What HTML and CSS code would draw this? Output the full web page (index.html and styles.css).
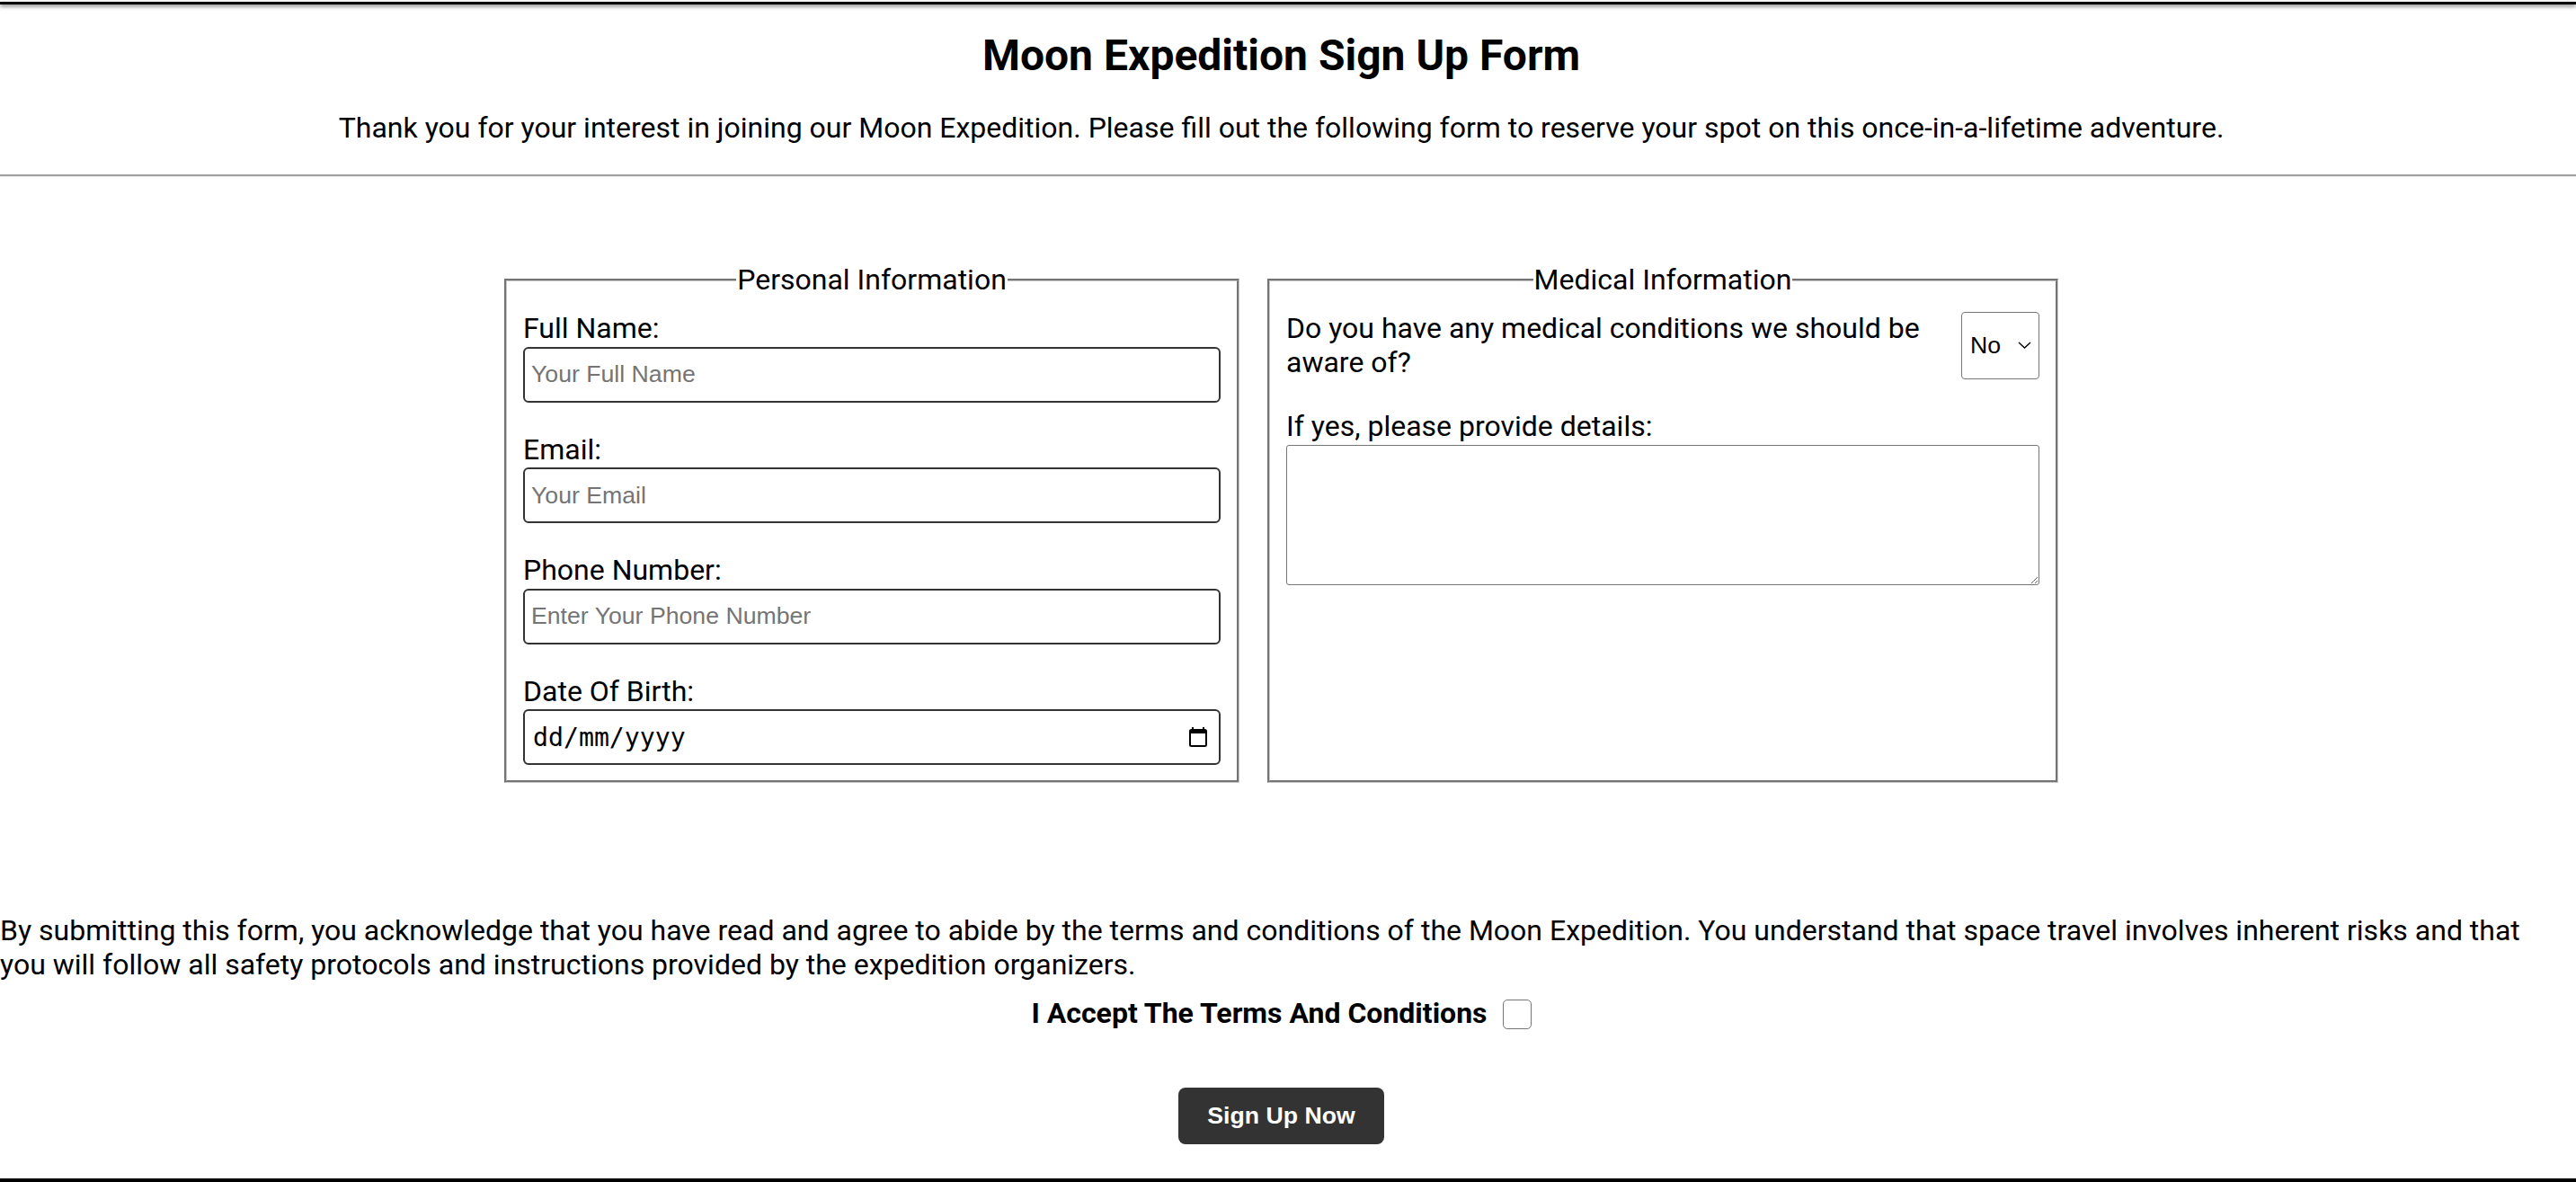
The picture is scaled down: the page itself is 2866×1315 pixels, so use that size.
FILE: index.html
```html
<!DOCTYPE html>
<html lang="en">
<head>
<meta charset="utf-8">
<title>Moon Expedition Sign Up Form</title>
<link rel="stylesheet" href="styles.css">
</head>
<body>
<div class="topbar"></div>
<header class="page-header">
  <h1 class="title">Moon Expedition Sign Up Form</h1>
  <p class="intro">Thank you for your interest in joining our Moon Expedition. Please fill out the following form to reserve your spot on this once-in-a-lifetime adventure.</p>
</header>
<div class="rule"></div>
<main class="content">
  <form class="signup" onsubmit="return false">
    <div class="sections">
      <fieldset class="section section-personal">
        <legend class="section-title">Personal Information</legend>
        <div class="field">
          <label class="field-label" for="fullname">Full Name:</label>
          <input class="text-input" id="fullname" type="text" placeholder="Your Full Name">
        </div>
        <div class="field">
          <label class="field-label" for="email">Email:</label>
          <input class="text-input" id="email" type="email" placeholder="Your Email">
        </div>
        <div class="field">
          <label class="field-label" for="phone">Phone Number:</label>
          <input class="text-input" id="phone" type="tel" placeholder="Enter Your Phone Number">
        </div>
        <div class="field field-last">
          <label class="field-label">Date Of Birth:</label>
          <div class="date-input">
            <span class="date-text">dd/mm/yyyy</span>
            <svg class="calendar-icon" width="20" height="22" viewBox="0 0 20 22" aria-hidden="true">
              <rect x="3" y="0" width="2" height="4" fill="#000"/>
              <rect x="15" y="0" width="2" height="4" fill="#000"/>
              <rect x="1" y="3" width="18" height="18" rx="1.5" fill="none" stroke="#000" stroke-width="2"/>
              <rect x="1" y="3" width="18" height="4" fill="#000"/>
            </svg>
          </div>
        </div>
      </fieldset>
      <fieldset class="section section-medical">
        <legend class="section-title">Medical Information</legend>
        <div class="question-row">
          <label class="question" for="conditions">Do you have any medical conditions we should be aware of?</label>
          <div class="select-wrap">
            <select class="yes-no" id="conditions">
              <option>No</option>
              <option>Yes</option>
            </select>
            <svg class="chevron" width="15" height="8" viewBox="0 0 15 8" aria-hidden="true">
              <path d="M1 1l6.5 6 6.5-6" fill="none" stroke="#000" stroke-width="1.4"/>
            </svg>
          </div>
        </div>
        <div class="field field-last">
          <label class="field-label" for="details">If yes, please provide details:</label>
          <textarea class="details" id="details"></textarea>
        </div>
      </fieldset>
    </div>
    <p class="terms">By submitting this form, you acknowledge that you have read and agree to abide by the terms and conditions of the Moon Expedition. You understand that space travel involves inherent risks and that you will follow all safety protocols and instructions provided by the expedition organizers.</p>
    <div class="accept-row">
      <label class="accept-label" for="accept">I Accept The Terms And Conditions</label>
      <input class="accept-box" id="accept" type="checkbox">
    </div>
    <div class="actions">
      <button class="submit" type="submit">Sign Up Now</button>
    </div>
  </form>
</main>
<div class="footer-bar"></div>
</body>
</html>
```

FILE: styles.css
```css
html, body {
  margin: 0;
  padding: 0;
  background: #fff;
}

body {
  font-family: Roboto, "Liberation Sans", sans-serif;
  font-size: 32px;
  color: #000;
  overflow: hidden;
}

.topbar {
  height: 3px;
  margin-top: 2px;
  background: #000;
  box-shadow: 0 2px 4px rgba(0, 0, 0, 0.6);
}

.page-header {
  padding: 28px 15px 0 0;
  text-align: center;
}

.title {
  margin: 0;
  font-size: 48px;
  font-weight: 700;
  line-height: normal;
}

.intro {
  margin: 32.75px 0 0;
  line-height: normal;
}

.rule {
  margin-top: 33.5px;
  height: 0;
  border-top: 2px solid #a0a0a0;
  border-bottom: 1px solid #ececec;
}

.content {
  padding-right: 15px;
}

.signup {
  margin: 0;
}

.sections {
  display: flex;
  justify-content: center;
  gap: 31px;
  margin-top: 94.75px;
}

.section {
  box-sizing: border-box;
  margin: 0;
  min-width: 0;
  border: 3px groove #c8c8c8;
  padding: 16px 18px 17px;
}

.section-personal {
  width: 818px;
}

.section-medical {
  width: 880px;
}

.section-title {
  margin: 0 auto;
  padding: 0 1px;
  line-height: normal;
}

.field {
  display: flex;
  flex-direction: column;
  margin-bottom: 33px;
}

.field-last {
  margin-bottom: 0;
}

.field-label {
  line-height: normal;
  margin-bottom: 1.5px;
}

.text-input {
  box-sizing: border-box;
  height: 62px;
  width: 100%;
  margin: 0;
  padding: 0 7px;
  border: 2px solid #333;
  border-radius: 6px;
  font-family: "Liberation Sans", Arial, sans-serif;
  font-size: 26.67px;
  color: #000;
  background: #fff;
  outline: none;
}

.text-input::placeholder {
  color: #757575;
}

.date-input {
  box-sizing: border-box;
  height: 62px;
  display: flex;
  align-items: center;
  justify-content: space-between;
  padding: 0 13px 0 9px;
  border: 2px solid #333;
  border-radius: 6px;
  background: #fff;
}

.date-text {
  font-family: "DejaVu Sans Mono", "Liberation Mono", monospace;
  font-size: 28.2px;
  color: #000;
}

.calendar-icon {
  display: block;
}

.question-row {
  display: flex;
  align-items: center;
  margin-bottom: 33px;
}

.question {
  flex: 1;
  line-height: normal;
}

.select-wrap {
  position: relative;
  margin-left: 20px;
  width: 87px;
  height: 75px;
}

.yes-no {
  appearance: none;
  -webkit-appearance: none;
  box-sizing: border-box;
  width: 100%;
  height: 100%;
  margin: 0;
  padding: 0 0 0 9px;
  border: 1px solid #767676;
  border-radius: 4px;
  background: #fff;
  font-family: "Liberation Sans", Arial, sans-serif;
  font-size: 26.67px;
  color: #000;
  outline: none;
}

.chevron {
  position: absolute;
  right: 9px;
  top: 33px;
  pointer-events: none;
}

.details {
  box-sizing: border-box;
  display: block;
  width: 100%;
  height: 156px;
  margin: 0;
  border: 1px solid #767676;
  border-radius: 3px;
  font-family: "Liberation Mono", monospace;
  font-size: 16px;
  background: #fff;
}

.terms {
  margin: 145.3px 0 0;
  line-height: normal;
}

.accept-row {
  display: flex;
  justify-content: center;
  align-items: center;
  margin-top: 15.7px;
  height: 37.5px;
}

.accept-label {
  font-weight: 700;
  line-height: normal;
}

.accept-box {
  appearance: none;
  -webkit-appearance: none;
  box-sizing: border-box;
  width: 32px;
  height: 33px;
  margin: 4px 0 0 17px;
  border: 1.5px solid #767676;
  border-radius: 5px;
  background: #fff;
}

.actions {
  display: flex;
  justify-content: center;
  margin-top: 64.5px;
}

.submit {
  height: 63px;
  padding: 0 32px;
  border: none;
  border-radius: 8px;
  background: #333;
  color: #fff;
  font-family: "Liberation Sans", Arial, sans-serif;
  font-size: 26.67px;
  font-weight: 700;
  cursor: pointer;
}

.footer-bar {
  margin-top: 38px;
  height: 60px;
  background: #000;
}
```
